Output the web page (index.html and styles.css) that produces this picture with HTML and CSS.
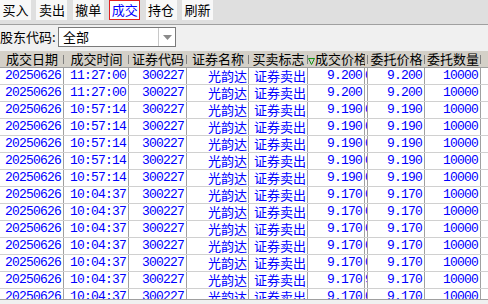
FILE: index.html
```html
<!DOCTYPE html>
<html lang="zh-CN">
<head>
<meta charset="utf-8">
<title>成交查询</title>
<link rel="stylesheet" href="styles.css">
</head>
<body>
<div class="app">
  <div class="toolbar">
    <span class="btn">买入</span>
    <span class="btn">卖出</span>
    <span class="btn">撤单</span>
    <span class="btn active">成交</span>
    <span class="btn">持仓</span>
    <span class="btn">刷新</span>
  </div>
  <div class="filter">
    <span class="label">股东代码:</span>
    <div class="select">
      <span class="val">全部</span>
      <span class="drop"><svg width="9" height="5" viewBox="0 0 9 5"><polygon points="0,0 9,0 4.5,5" fill="#8a8a8a"/></svg></span>
    </div>
  </div>
  <div class="grid">
    <div class="row head">
      <div class="hc">成交日期</div>
      <div class="hc">成交时间</div>
      <div class="hc">证券代码</div>
      <div class="hc">证券名称</div>
      <div class="hc">买卖标志</div>
      <div class="hc sort"><svg class="tri" width="7" height="8" viewBox="0 0 7 8"><polygon points="0.5,1.5 6.5,1.5 3.5,7.5" fill="none" stroke="#109010" stroke-width="1"/></svg>成交价格</div>
      <div class="hc thin"></div>
      <div class="hc">委托价格</div>
      <div class="hc">委托数量</div>
      <div class="hc">委托时间</div>
    </div>
    <div class="row"><div class="c n">20250626</div><div class="c n">11:27:00</div><div class="c n">300227</div><div class="c">光韵达</div><div class="c">证券卖出</div><div class="c n">9.200</div><div class="c n thin">0</div><div class="c n">9.200</div><div class="c n">10000</div><div class="c n"></div></div>
    <div class="row"><div class="c n">20250626</div><div class="c n">11:27:00</div><div class="c n">300227</div><div class="c">光韵达</div><div class="c">证券卖出</div><div class="c n">9.200</div><div class="c n thin"></div><div class="c n">9.200</div><div class="c n">10000</div><div class="c n"></div></div>
    <div class="row"><div class="c n">20250626</div><div class="c n">10:57:14</div><div class="c n">300227</div><div class="c">光韵达</div><div class="c">证券卖出</div><div class="c n">9.190</div><div class="c n thin">0</div><div class="c n">9.190</div><div class="c n">10000</div><div class="c n"></div></div>
    <div class="row"><div class="c n">20250626</div><div class="c n">10:57:14</div><div class="c n">300227</div><div class="c">光韵达</div><div class="c">证券卖出</div><div class="c n">9.190</div><div class="c n thin">0</div><div class="c n">9.190</div><div class="c n">10000</div><div class="c n"></div></div>
    <div class="row"><div class="c n">20250626</div><div class="c n">10:57:14</div><div class="c n">300227</div><div class="c">光韵达</div><div class="c">证券卖出</div><div class="c n">9.190</div><div class="c n thin">0</div><div class="c n">9.190</div><div class="c n">10000</div><div class="c n"></div></div>
    <div class="row"><div class="c n">20250626</div><div class="c n">10:57:14</div><div class="c n">300227</div><div class="c">光韵达</div><div class="c">证券卖出</div><div class="c n">9.190</div><div class="c n thin">0</div><div class="c n">9.190</div><div class="c n">10000</div><div class="c n"></div></div>
    <div class="row"><div class="c n">20250626</div><div class="c n">10:57:14</div><div class="c n">300227</div><div class="c">光韵达</div><div class="c">证券卖出</div><div class="c n">9.190</div><div class="c n thin">0</div><div class="c n">9.190</div><div class="c n">10000</div><div class="c n"></div></div>
    <div class="row"><div class="c n">20250626</div><div class="c n">10:04:37</div><div class="c n">300227</div><div class="c">光韵达</div><div class="c">证券卖出</div><div class="c n">9.170</div><div class="c n thin">0</div><div class="c n">9.170</div><div class="c n">10000</div><div class="c n"></div></div>
    <div class="row"><div class="c n">20250626</div><div class="c n">10:04:37</div><div class="c n">300227</div><div class="c">光韵达</div><div class="c">证券卖出</div><div class="c n">9.170</div><div class="c n thin">0</div><div class="c n">9.170</div><div class="c n">10000</div><div class="c n"></div></div>
    <div class="row"><div class="c n">20250626</div><div class="c n">10:04:37</div><div class="c n">300227</div><div class="c">光韵达</div><div class="c">证券卖出</div><div class="c n">9.170</div><div class="c n thin">0</div><div class="c n">9.170</div><div class="c n">10000</div><div class="c n"></div></div>
    <div class="row"><div class="c n">20250626</div><div class="c n">10:04:37</div><div class="c n">300227</div><div class="c">光韵达</div><div class="c">证券卖出</div><div class="c n">9.170</div><div class="c n thin">0</div><div class="c n">9.170</div><div class="c n">10000</div><div class="c n"></div></div>
    <div class="row"><div class="c n">20250626</div><div class="c n">10:04:37</div><div class="c n">300227</div><div class="c">光韵达</div><div class="c">证券卖出</div><div class="c n">9.170</div><div class="c n thin">0</div><div class="c n">9.170</div><div class="c n">10000</div><div class="c n"></div></div>
    <div class="row"><div class="c n">20250626</div><div class="c n">10:04:37</div><div class="c n">300227</div><div class="c">光韵达</div><div class="c">证券卖出</div><div class="c n">9.170</div><div class="c n thin">9</div><div class="c n">9.170</div><div class="c n">10000</div><div class="c n"></div></div>
    <div class="row"><div class="c n">20250626</div><div class="c n">10:04:37</div><div class="c n">300227</div><div class="c">光韵达</div><div class="c">证券卖出</div><div class="c n">9.170</div><div class="c n thin">0</div><div class="c n">9.170</div><div class="c n">10000</div><div class="c n"></div></div>
  </div>
  <div class="hscroll"></div>
</div>
</body>
</html>
```

FILE: styles.css
```css
* { box-sizing: border-box; margin: 0; padding: 0; }
html, body { width: 488px; height: 304px; overflow: hidden; }
body {
  background: #f0f0f0;
  font-family: "Noto Sans CJK SC", "Noto Sans", sans-serif;
  font-size: 13px;
  color: #000;
}
.app { display: flex; flex-direction: column; height: 304px; }

.toolbar {
  height: 25px;
  flex: none;
  background: #dfdfdf;
  border-bottom: 1px solid #a0a0a0;
  display: flex;
  align-items: flex-start;
  gap: 5.4px;
}
.btn {
  width: 31px;
  height: 20px;
  background: #f8f8f8;
  line-height: 19px;
  text-align: center;
}
.btn.active {
  background: #fff;
  border: 1px solid #e02020;
  color: #0000ff;
  line-height: 17px;
}

.filter {
  height: 26px;
  flex: none;
  display: flex;
  align-items: flex-start;
  padding-top: 2px;
}
.label { width: 58px; line-height: 20px; }
.select {
  width: 118px;
  height: 20px;
  border: 1px solid #7a7a7a;
  background: #fff;
  display: flex;
}
.val { flex: 1; padding-left: 4px; line-height: 18px; }
.drop {
  width: 17px;
  border-left: 1px solid #c8c8c8;
  display: flex;
  align-items: center;
  justify-content: center;
}

.grid { flex: 1; overflow: hidden; background: #fff; }
.row {
  display: grid;
  grid-template-columns: 64px 65px 58px 62px 59px 57px 3px 57px 56px 80px;
  height: 17px;
  border-bottom: 1px solid #d0d0d0;
}
.c {
  border-right: 1px solid #a0a0a0;
  text-align: right;
  padding-right: 1px;
  white-space: nowrap;
  line-height: 16px;
  color: #0000ff;
}
.n {
  font-family: "Liberation Mono", monospace;
  font-size: 13px;
  letter-spacing: -0.8px;
  padding-right: 2px;
}
.c.thin { text-align: left; padding: 0; overflow: hidden; }

.row.head { background: #d4d0c8; border-bottom: 1px solid #a0a0a0; }
.hc {
  position: relative;
  text-align: center;
  line-height: 16px;
  white-space: nowrap;
}
.hc::after {
  content: "";
  position: absolute;
  right: 0;
  top: 4px;
  width: 1px;
  height: 9px;
  background: #808080;
}
.hc.sort { text-align: left; overflow: hidden; }
.tri { vertical-align: -1px; }

.hscroll {
  height: 5px;
  flex: none;
  border-top: 1px solid #a0a0a0;
  background: #f0f0f0;
}
```
